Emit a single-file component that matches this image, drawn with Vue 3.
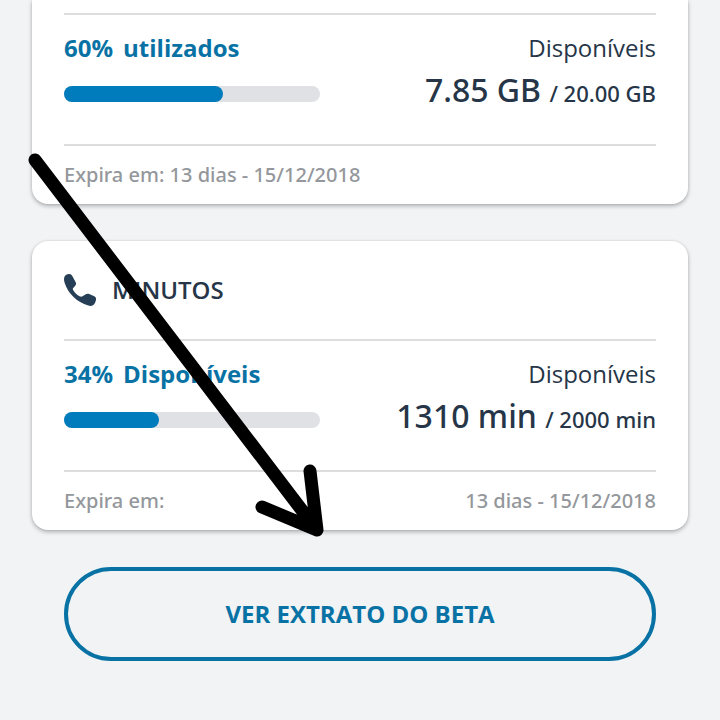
<script setup>
const plans = [
  {
    id: 'data',
    title: '',
    percent: 60,
    label: 'utilizados',
    fill: 62,
    left: '7.85 GB',
    total: '20.00 GB',
    expires: ['Expira em: 13 dias - 15/12/2018'],
  },
  {
    id: 'minutes',
    title: 'MINUTOS',
    percent: 34,
    label: 'Disponíveis',
    fill: 37,
    left: '1310 min',
    total: '2000 min',
    expires: ['Expira em:', '13 dias - 15/12/2018'],
  },
]
</script>

<template>
  <main class="screen">
    <section v-for="plan in plans" :key="plan.id" class="card" :class="{ continued: !plan.title }">
      <header v-if="plan.title" class="card-header">
        <svg class="phone" viewBox="0 0 32 32" aria-hidden="true">
          <path
            d="M0 5C0 2 2 .2 4.500 0C6.500-.1 7.500.6 8.300 2L11.700 8.200C12.300 9.600 12.100 10.800 11 12L9.200 13.900C8.600 14.600 8.700 15.300 9.100 16C10.500 18.500 12.700 20.700 15.500 22.300C16.500 22.900 17.700 23 18.600 22.300L21.300 20.500C22.600 19.600 23.800 19.500 25.200 20L30.300 22.200C31.700 22.900 32.200 24 32 25.500C31.700 28 30.700 30 29 31.200C27.800 32 26 32.200 24.300 31.600C18.500 29.800 13.500 27 9.300 22.800C5.500 19 2.300 14.200.7 9C.2 7.500 0 6.300 0 5z"
          />
        </svg>
        <h2 class="card-title">{{ plan.title }}</h2>
      </header>

      <div class="usage">
        <div class="usage-progress">
          <div class="usage-label">
            <span>{{ plan.percent }}%</span>
            <span>{{ plan.label }}</span>
          </div>
          <div class="bar">
            <div class="bar-fill" :style="{ width: plan.fill + '%' }"></div>
          </div>
        </div>
        <div class="usage-amount">
          <div class="amount-label">Disponíveis</div>
          <div class="amount">{{ plan.left }} <small>/ {{ plan.total }}</small></div>
        </div>
      </div>

      <footer class="card-footer">
        <span v-for="text in plan.expires" :key="text">{{ text }}</span>
      </footer>
    </section>

    <button type="button" class="statement">VER EXTRATO DO BETA</button>

    <!-- hand-drawn arrow pointing at the statement button -->
    <svg class="arrow" viewBox="0 0 300 400" aria-hidden="true">
      <path d="M15 10L297 380M242 357L297 380L290 321" />
    </svg>
  </main>
</template>

<style>
body {
  margin: 0;
  background: #f1f3f5;
}
</style>

<style scoped>
.screen {
  position: relative;
  display: flex;
  flex-direction: column;
  padding: 0 32px 32px;
  font-family: "Open Sans", "Noto Sans", sans-serif;
  color: #263648;
}

.card {
  padding: 0 32px;
  margin-bottom: 37px;
  border-radius: 16px;
  background: #fff;
  box-shadow: 0 2px 4px rgba(0, 0, 0, 0.28), 0 0 2px rgba(0, 0, 0, 0.12);
}
.card.continued {
  padding-top: 13px;
  border-radius: 0 0 16px 16px;
}

.card-header {
  display: flex;
  align-items: center;
  gap: 16px;
  height: 98px;
}
.phone {
  width: 32px;
  height: 32px;
  fill: #263f56;
}
.card-title {
  margin: 0;
  font-size: 24px;
  line-height: 32px;
  font-weight: 600;
}

.usage {
  display: flex;
  justify-content: space-between;
  padding: 17px 0 32px;
  border-top: 2px solid #dcddde;
  border-bottom: 2px solid #dcddde;
}
.usage-progress {
  flex: 0 0 256px;
}
.usage-label {
  display: flex;
  gap: 10px;
  font-size: 24px;
  line-height: 32px;
  font-weight: 700;
  color: #0972a5;
}
.bar {
  height: 16px;
  margin-top: 22px;
  border-radius: 8px;
  background: #dfe1e5;
}
.bar-fill {
  height: 100%;
  border-radius: 8px;
  background: #007bbb;
}

.usage-amount {
  text-align: right;
}
.amount-label {
  font-size: 24px;
  line-height: 32px;
}
.amount {
  margin-top: 4px;
  font-family: "Noto Sans", sans-serif;
  font-size: 32px;
  line-height: 44px;
  font-weight: 500;
}
.amount small {
  font-size: 22px;
  line-height: 32px;
}

.card-footer {
  display: flex;
  justify-content: space-between;
  padding: 16px 0;
  font-family: "Noto Sans", sans-serif;
  font-size: 20px;
  line-height: 26px;
  font-weight: 500;
  color: #94979b;
}

.statement {
  margin: 0 32px;
  padding: 27px 32px;
  border: 4px solid #0972a5;
  border-radius: 48px;
  background: transparent;
  font-family: inherit;
  font-size: 24px;
  line-height: 32px;
  font-weight: 700;
  color: #0972a5;
  cursor: pointer;
}

.arrow {
  position: absolute;
  top: 150px;
  left: 20px;
  width: 300px;
  height: 400px;
  overflow: visible;
  fill: none;
  stroke: #000;
  stroke-width: 13px;
  stroke-linecap: round;
  stroke-linejoin: round;
  pointer-events: none;
}
</style>
